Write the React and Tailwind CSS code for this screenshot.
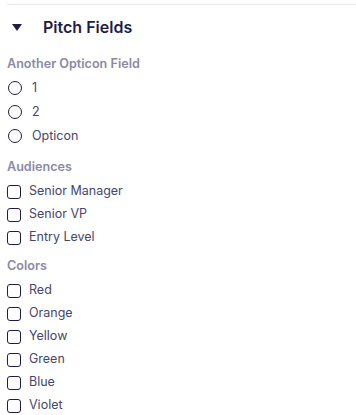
import React from "react";

function Radio({ label }) {
  return (
    <div className="h-[24px] flex items-center">
      <span className="ml-[1px] w-[14px] h-[14px] rounded-full border-[1.5px] border-[#1f1c47] box-border shrink-0" />
      <span className="ml-[10px] text-[12.5px] text-[#47456a] leading-none">{label}</span>
    </div>
  );
}

function Check({ label }) {
  return (
    <div className="h-[23px] flex items-center">
      <span className="w-[14px] h-[14px] rounded-[3px] border-[1.5px] border-[#1f1c47] box-border shrink-0" />
      <span className="ml-[8px] text-[12.5px] text-[#47456a] leading-none">{label}</span>
    </div>
  );
}

function Label({ children, className = "" }) {
  return (
    <div className={"h-[16px] flex items-center text-[12.6px] font-semibold text-[#8b89a3] leading-none " + className}>
      {children}
    </div>
  );
}

export default function App() {
  return (
    <div className="w-[356px] h-[415px] bg-white overflow-hidden font-['Inter',sans-serif]">
      <div className="mt-[4px] ml-[7px] border-t border-[#e8e8f0]">
        <div className="h-[44px] flex items-center pl-[5px]">
          <svg width="10" height="7" viewBox="0 0 10 7" className="shrink-0 mt-[1px]">
            <path d="M0 0 L10 0 L5 7 Z" fill="#1f1c47" />
          </svg>
          <span className="ml-[21px] text-[16px] font-semibold text-[#1f1c47] leading-none">Pitch Fields</span>
        </div>
        <Label className="mt-[7px]">Another Opticon Field</Label>
        <div className="mt-[4px]">
          <Radio label="1" />
          <Radio label="2" />
          <Radio label="Opticon" />
        </div>
        <Label className="mt-[11px]">Audiences</Label>
        <div className="mt-[5px]">
          <Check label="Senior Manager" />
          <Check label="Senior VP" />
          <Check label="Entry Level" />
        </div>
        <Label className="mt-[9px]">Colors</Label>
        <div className="mt-[5px]">
          <Check label="Red" />
          <Check label="Orange" />
          <Check label="Yellow" />
          <Check label="Green" />
          <Check label="Blue" />
          <Check label="Violet" />
        </div>
      </div>
    </div>
  );
}
